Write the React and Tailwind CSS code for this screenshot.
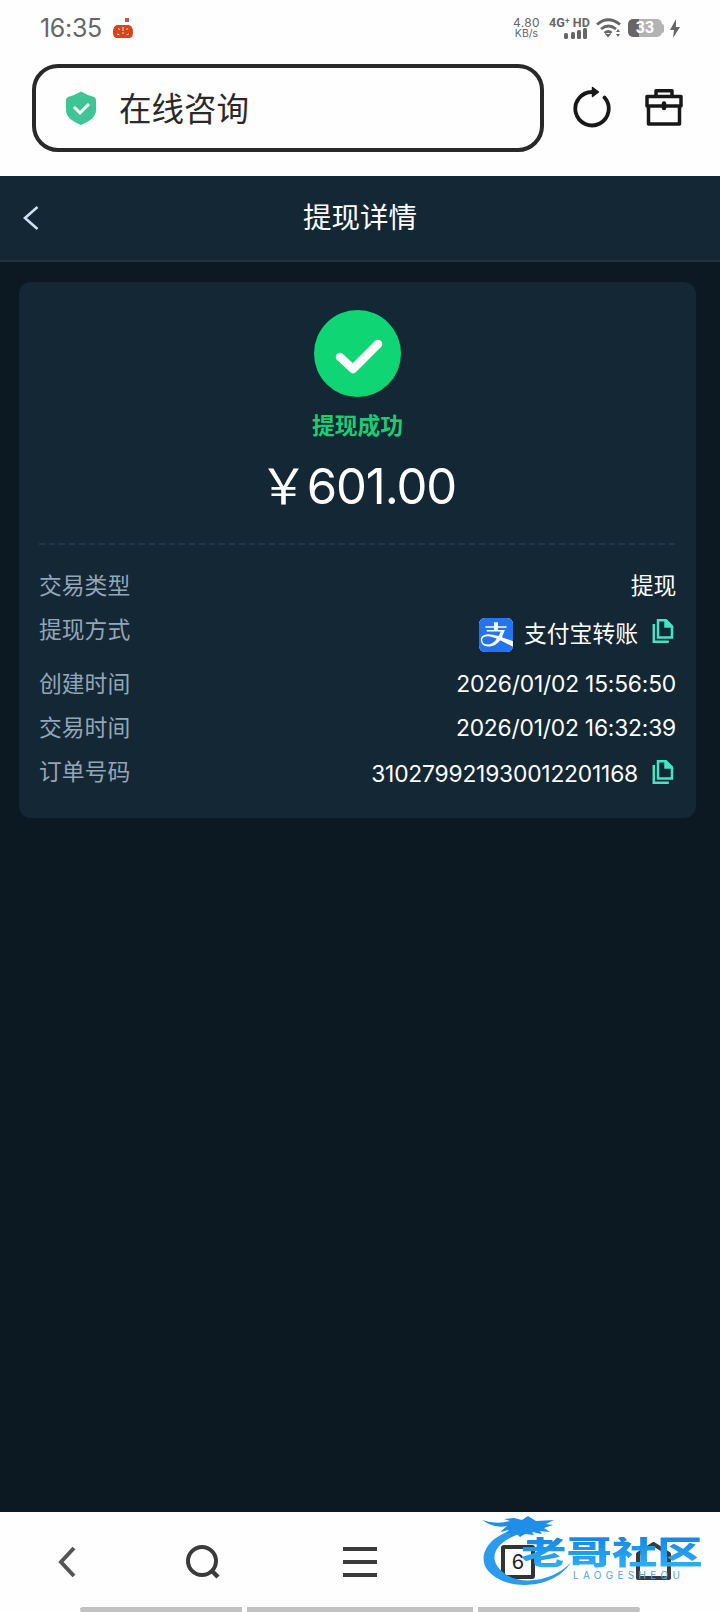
import { FaAlipay } from "react-icons/fa";

const StatusBar = () => (
  <div className="flex h-[56px] items-center pl-[40px] pr-[40px] text-[#666]">
    <span className="w-[63px] whitespace-nowrap text-[25px] leading-none tracking-[-0.3px]">16:35</span>
    <svg className="ml-[9px]" width="22" height="22" viewBox="0 0 22 22">
      <rect x="13" y="1" width="4" height="4" fill="#c9574a" />
      <path d="M5 8h12c3 1 4 4 4 6.500 0 4-1 6.500-4 6.500H5c-3 0-4-2.500-4-6.500C1 12 2 9 5 8z" fill="#d8421c" />
      <path d="M6.500 11l1 2M11 10v4M15.500 11l-1 2M5 17l2.500 .8M10 16h2M14.500 17.800l2.500-.8" stroke="#ffe0b8" strokeWidth="1" />
    </svg>
    <div className="ml-auto flex w-[27px] flex-col items-center text-[12px] leading-[11px]">
      <span className="tracking-[0.4px]">4.80</span>
      <span className="text-[10.500px]">KB/s</span>
    </div>
    <div className="ml-[9px] flex w-[40px] flex-col">
      <span className="whitespace-nowrap font-['Roboto'] text-[12.500px] font-bold leading-[11px]">4G⁺ HD</span>
      <svg className="ml-[15px]" width="24" height="11" viewBox="0 0 24 11" fill="#666">
        <rect x="0" y="5" width="4" height="6" rx="1.5" />
        <rect x="7" y="4" width="4" height="7" rx="1.5" />
        <rect x="13" y="2" width="4" height="9" rx="1.5" />
        <rect x="19" y="0" width="4" height="11" rx="1.5" />
      </svg>
    </div>
    <svg className="ml-[7px]" width="26" height="20" viewBox="0 0 26 20" fill="none" stroke="#666" strokeWidth="2.8">
      <path d="M1 6.500q11-9.500 23 0M5 11q7.500-6 15 0" />
      <path d="M8.500 15q4-3 7 0" />
      <path d="M9 16h6l-3 3.500zM20 14l2-3 2 3zM20 16l2 3 2-3z" fill="#666" stroke="none" />
    </svg>
    <div className="ml-[6px] flex h-[18px] w-[34px] items-center justify-center rounded-[5px] bg-linear-to-r from-[#666] from-33% to-[#b3b3b3] to-33% font-['Roboto'] text-[16px] font-bold leading-none text-white">
      33
    </div>
    <div className="h-[9px] w-[2px] rounded-r bg-[#b3b3b3]" />
    <svg className="ml-[6px]" width="10" height="19" viewBox="0 0 10 19">
      <path d="M6 0L0 11h4L3 19l7-11H6z" fill="#666" />
    </svg>
  </div>
);

const AddressBar = () => (
  <div className="flex h-[120px] items-start pl-[32px] pt-[8px]">
    <div className="flex h-[88px] w-[512px] items-center rounded-[26px] border-4 border-[#292929] pl-[29px]">
      <svg width="32" height="34" viewBox="0 0 32 34">
        <path d="M16 .5Q22 4 29 6q2 1 2 3v10c0 7-6 11-15 15C7 30 1 26 1 19V9q0-2 2-3Q10 4 16 .5z" fill="#3ec495" />
        <path d="M9 16l6 6 9-9" fill="none" stroke="#fff" strokeWidth="3" />
      </svg>
      <span className="ml-[22px] mt-[5px] text-[32.500px] leading-none text-[#292929]">在线咨询</span>
    </div>
    <svg className="ml-[28px] mt-[21px]" width="40" height="44" viewBox="0 0 40 44" fill="none" stroke="#181818" strokeWidth="3.800">
      <path d="M20 7A16.700 16.700 0 1 0 32.500 12.600" strokeLinecap="round" />
      <path d="M20.500 2.500l6 4.500-6 4.500z" fill="#181818" strokeWidth="1.500" strokeLinejoin="round" />
    </svg>
    <svg className="ml-[33px] mt-[24px]" width="38" height="38" viewBox="0 0 38 38" fill="none" stroke="#181818" strokeWidth="3.500" strokeLinejoin="round">
      <path d="M11 8V2.800h16V8M2 8.500h34v9.500H2zM3.500 18v18h31V18" />
      <path d="M19 15.500v4.500" strokeWidth="4.500" strokeLinecap="round" />
    </svg>
  </div>
);

const CopyIcon = () => (
  <svg className="ml-[14px] mr-[2px] -mt-[2px]" width="22" height="24" viewBox="0 0 22 24" fill="none" stroke="#45e5c2" strokeWidth="2.500">
    <path d="M6 1.300h8l6 6V18.500H6z" />
    <path d="M13 1.500v6.500h7z" fill="#45e5c2" strokeWidth="1.500" />
    <path d="M1.800 5v17.700h15" />
  </svg>
);

const Row = ({ label, className = "h-[44px]", children }) => (
  <div className={`flex items-start justify-between ${className}`}>
    <span className="text-[22.800px] leading-[44px] text-[#93a6b8]">{label}</span>
    <div className="flex items-center text-[22.800px] leading-[44px] tracking-[-0.2px] text-white">{children}</div>
  </div>
);

const DetailCard = () => (
  <div className="ml-[19px] mt-[20px] h-[536px] w-[677px] rounded-[12px] bg-[#142735] px-[20px] pt-[28px]">
    <div className="flex flex-col items-center">
      <svg width="87" height="87" viewBox="0 0 87 87">
        <circle cx="43.500" cy="43.500" r="43.500" fill="#0fd575" />
        <path d="M26 47l13 12 25-25" fill="none" stroke="#fff" strokeWidth="8.500" strokeLinecap="round" strokeLinejoin="round" />
      </svg>
      <div className="mt-[13px] text-[22.800px] font-bold leading-[32px] text-[#1ccb74]">提现成功</div>
      <div className="mt-[15px] h-[60px] whitespace-nowrap text-[49px] leading-[60px] tracking-[-1.100px] text-white">￥601.00</div>
    </div>
    <div className="mt-[26px] h-[2px] bg-[repeating-linear-gradient(90deg,#233645_0_6px,transparent_6px_10px)]" />
    <div className="mt-[19px]">
      <Row label="交易类型">提现</Row>
      <Row label="提现方式" className="h-[54px]">
        <div className="mr-[11px] mt-[6px] flex h-[34px] w-[34px] items-center justify-center overflow-hidden rounded-[6px] bg-white">
          <FaAlipay className="shrink-0 text-[#2374f0]" size={40} />
        </div>
        <span className="mt-[4px] tracking-normal">支付宝转账</span>
        <CopyIcon />
      </Row>
      <Row label="创建时间">2026/01/02 15:56:50</Row>
      <Row label="交易时间">2026/01/02 16:32:39</Row>
      <Row label="订单号码">
        <span className="mt-[2px]">310279921930012201168</span>
        <CopyIcon />
      </Row>
    </div>
  </div>
);

const Watermark = () => (
  <div className="absolute left-[480px] top-[1514px] h-[76px] w-[230px]">
    <svg className="absolute left-0 top-0" width="100" height="76" viewBox="0 0 100 76">
      <path d="M38 15C10 20-2 40 6 54c16 24 68 23 85-6C76 66 42 73 24 59 6 46 14 26 44 19z" fill="#2a9bed" />
      <path
        d="M2 6q14 5 28 1l-6-2 10-1 8 2 6-4 8 5 18-1-8 4 7 1-9 3 6 4-10-1 2 3-10-2 2 3-9-1-5 3-3-3-7 3 1-4-6 1 4-4-9 2 7-6q-12 3-25-6z"
        fill="#1e8ee8"
      />
    </svg>
    <div className="absolute left-[41px] top-[23px] origin-left scale-x-[1.42] bg-linear-to-b from-[#1687e4] to-[#2fb0f7] bg-clip-text text-[32px] font-black leading-[32px] text-transparent">
      老哥社区
    </div>
    <div className="absolute left-[93px] top-[56px] text-[10px] leading-[10px] tracking-[4.300px] text-[#4aa5e6]">LAOGESHEQU</div>
  </div>
);

const BottomNav = () => (
  <div className="h-[100px] bg-[#fefefe]">
    <div className="flex h-[96px] items-center pl-[58px] pt-[4px] text-[#3a3a3a]">
      <svg width="18" height="32" viewBox="0 0 18 32" fill="none" stroke="#555" strokeWidth="4">
        <path d="M16 2L3 16l13 14" />
      </svg>
      <svg className="ml-[110px]" width="34" height="34" viewBox="0 0 34 34" fill="none" stroke="#3a3a3a" strokeWidth="4">
        <circle cx="16" cy="16" r="14" />
        <path d="M26 26l6 6" strokeWidth="4.500" />
      </svg>
      <svg className="ml-[123px]" width="34" height="32" viewBox="0 0 34 32" stroke="#3a3a3a" strokeWidth="4">
        <path d="M0 3h34M0 16h34M0 29h34" />
      </svg>
      <div className="ml-[124px] h-[34px] w-[34px] rounded-[3px] border-4 border-[#333] text-center text-[20px] leading-[27px] text-[#222]">6</div>
      <svg className="ml-[101px] -mt-[3px]" width="35" height="38" viewBox="0 0 35 38" fill="none" stroke="#3a3a3a" strokeWidth="4" strokeLinejoin="round">
        <path d="M2 12L17.500 2 33 12v24H2z" />
      </svg>
    </div>
    {/* gesture hints cut off by the screen edge */}
    <div className="flex h-[4px] gap-[5px] pl-[80px] pt-0">
      <div className="-mt-px h-[5px] w-[162px] rounded-l-full bg-[#c1c1c1]" />
      <div className="-mt-px h-[5px] w-[226px] bg-[#c1c1c1]" />
      <div className="-mt-px h-[5px] w-[162px] rounded-r-full bg-[#c1c1c1]" />
    </div>
  </div>
);

export default function App() {
  return (
    <div className="relative flex h-[1612px] w-[720px] flex-col overflow-hidden bg-[#0c1922] font-['Inter','Noto_Sans_CJK_SC',sans-serif]">
      <div className="h-[176px] bg-[#fefefe]">
        <StatusBar />
        <AddressBar />
      </div>
      <div className="flex h-[86px] items-center border-b-2 border-[#1f3345] bg-[#142735]">
        <svg className="ml-[23px]" width="16" height="24" viewBox="0 0 16 24" fill="none" stroke="#cfe0f5" strokeWidth="2.600">
          <path d="M14.500 1L2 12l12.500 11" />
        </svg>
        <h1 className="mr-[39px] flex-1 text-center text-[28.500px] leading-none text-white">提现详情</h1>
      </div>
      <DetailCard />
      <div className="mt-auto">
        <BottomNav />
      </div>
      <Watermark />
    </div>
  );
}
